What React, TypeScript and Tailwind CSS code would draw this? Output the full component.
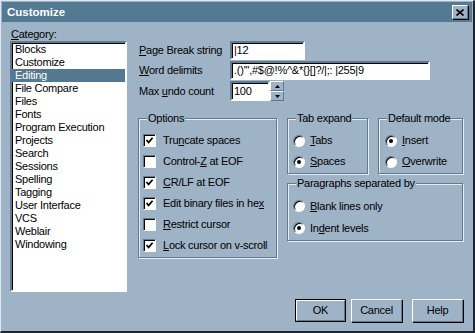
import React from 'react'

const BG = 'bg-[#9fb3c6]'

// raised 3d edge used for buttons
const raised =
  'border border-t-white border-l-white border-r-[#5f7b90] border-b-[#5f7b90] shadow-[1px_1px_0_#000]'
// sunken edge used for edit fields and list
const sunken =
  'border-2 border-t-[#5f7b90] border-l-[#5f7b90] border-r-white border-b-white shadow-[inset_1px_1px_0_#000]'

const Mn: React.FC<{ children: React.ReactNode }> = ({ children }) => (
  <u className="underline underline-offset-[1px] decoration-1">{children}</u>
)

const Check: React.FC<{ on?: boolean }> = ({ on }) => (
  <span className="w-[13px] h-[13px] bg-white border border-t-[#5f7b90] border-l-[#5f7b90] border-r-white border-b-white shadow-[inset_1px_1px_0_#000] flex items-center justify-center shrink-0">
    {on && (
      <svg width="9" height="9" viewBox="0 0 9 9">
        <polyline points="1.5,4 3.6,6.4 7.6,1.8" fill="none" stroke="#000" strokeWidth="1.7" />
      </svg>
    )}
  </span>
)

const Radio: React.FC<{ on?: boolean }> = ({ on }) => (
  <span className="w-[12px] h-[12px] rounded-full bg-white border border-t-[#5f7b90] border-l-[#5f7b90] border-r-white border-b-white shadow-[inset_1px_1px_0_#000] flex items-center justify-center shrink-0">
    {on && <span className="w-[4px] h-[4px] rounded-full bg-black" />}
  </span>
)

const Group: React.FC<{ title: string; className: string; children: React.ReactNode }> = ({
  title,
  className,
  children,
}) => (
  <div
    className={`relative border border-[#5f7b90] shadow-[inset_1px_1px_0_#e6edf3,1px_1px_0_#e6edf3] ${className}`}
  >
    <span className={`absolute left-[8px] top-[-8px] px-[1px] leading-[14px] whitespace-nowrap ${BG}`}>
      {title}
    </span>
    {children}
  </div>
)

const categories = [
  'Blocks',
  'Customize',
  'Editing',
  'File Compare',
  'Files',
  'Fonts',
  'Program Execution',
  'Projects',
  'Search',
  'Sessions',
  'Spelling',
  'Tagging',
  'User Interface',
  'VCS',
  'Weblair',
  'Windowing',
]

const options: { label: React.ReactNode; on: boolean }[] = [
  { label: <>Tru<Mn>n</Mn>cate spaces</>, on: true },
  { label: <>Control-<Mn>Z</Mn> at EOF</>, on: false },
  { label: <><Mn>C</Mn>R/LF at EOF</>, on: true },
  { label: <>Edit binary files in he<Mn>x</Mn></>, on: true },
  { label: <><Mn>R</Mn>estrict cursor</>, on: false },
  { label: <><Mn>L</Mn>ock cursor on v-scroll</>, on: true },
]

const Btn: React.FC<{ children: React.ReactNode; def?: boolean; className?: string }> = ({
  children,
  def,
  className = '',
}) => (
  <div className={`${def ? 'border border-black' : ''} ${className}`}>
    <div className={`h-full flex items-center justify-center ${raised} ${BG}`}>{children}</div>
  </div>
)

export default function App() {
  return (
    <div
      className={`w-[475px] h-[333px] ${BG} border-t border-l border-t-[#dfe7ee] border-l-[#dfe7ee] border-r-2 border-b-2 border-r-[#1a2530] border-b-[#1a2530] flex flex-col text-black text-[11px] tracking-[-0.25px] leading-[13px] whitespace-nowrap`}
      style={{ fontFamily: '"Liberation Sans", Arial, sans-serif' }}
    >
      {/* title bar */}
      <div className="mx-[1px] mt-[1px] h-[20px] bg-[#537a93] flex items-center justify-between pl-[5px] pr-[4px]">
        <span className="text-white font-bold text-[11.5px] tracking-normal">Customize</span>
        <div className={`w-[16px] h-[14px] flex items-center justify-center ${raised} ${BG}`}>
          <svg width="8" height="7" viewBox="0 0 8 7">
            <path d="M0.5 0.5 L7.5 6.5 M7.5 0.5 L0.5 6.5" stroke="#000" strokeWidth="1.6" />
          </svg>
        </div>
      </div>

      <div className="flex pl-[9px]">
        {/* category list */}
        <div className="w-[117px] pt-[5px]">
          <div className="h-[14px] leading-[14px] pl-[1px]">
            <Mn>C</Mn>ategory:
          </div>
          <div className={`h-[251px] bg-white ${sunken}`}>
            {categories.map((c) => (
              <div
                key={c}
                className={`h-[13px] leading-[13px] pl-[3px] ${
                  c === 'Editing' ? 'bg-[#53788f] text-white' : ''
                }`}
              >
                {c}
              </div>
            ))}
          </div>
        </div>

        {/* settings */}
        <div className="w-[325px] ml-[11px] pt-[19px] flex flex-col">
          <div className="flex items-center h-[19px]">
            <span className="w-[92px] pl-[1px]">
              <Mn>P</Mn>age Break string
            </span>
            <div className={`w-[75px] h-[19px] bg-white ${sunken} pl-[2px] leading-[15px]`}>|12</div>
          </div>
          <div className="flex items-center h-[19px] mt-[1px]">
            <span className="w-[92px] pl-[1px]">
              <Mn>W</Mn>ord delimits
            </span>
            <div className={`w-[200px] h-[19px] bg-white ${sunken} pl-[2px] leading-[15px] overflow-hidden`}>
              .()'",#$@!%^&amp;*{'{}'}[]?/|;: |255|9
            </div>
          </div>
          <div className="flex items-center h-[20px] mt-[1px]">
            <span className="w-[92px] pl-[1px]">
              Max <Mn>u</Mn>ndo count
            </span>
            <div className={`w-[40px] h-[20px] bg-white ${sunken} pl-[2px] leading-[16px]`}>100</div>
            <div className="flex flex-col w-[14px] h-[20px]">
              <div className={`h-[10px] flex items-center justify-center ${raised} shadow-none ${BG}`}>
                <svg width="5" height="3" viewBox="0 0 5 3">
                  <path d="M2.5 0 L5 3 L0 3 Z" fill="#000" />
                </svg>
              </div>
              <div className={`h-[10px] flex items-center justify-center ${raised} shadow-none ${BG}`}>
                <svg width="5" height="3" viewBox="0 0 5 3">
                  <path d="M0 0 L5 0 L2.5 3 Z" fill="#000" />
                </svg>
              </div>
            </div>
          </div>

          <div className="flex mt-[17px]">
            <Group title="Options" className="w-[140px] h-[140px] pt-[11px] pl-[4px]">
              {options.map((o, i) => (
                <div key={i} className="h-[21px] flex items-center gap-[7px]">
                  <Check on={o.on} />
                  <span>{o.label}</span>
                </div>
              ))}
            </Group>

            <div className="ml-[10px] flex flex-col">
              <div className="flex">
                <Group title="Tab expand" className="w-[81px] h-[56px] pt-[11px] pl-[5px]">
                  <div className="h-[21px] flex items-center gap-[5px]">
                    <Radio />
                    <span>
                      <Mn>T</Mn>abs
                    </span>
                  </div>
                  <div className="h-[21px] flex items-center gap-[5px]">
                    <Radio on />
                    <span>
                      <Mn>S</Mn>paces
                    </span>
                  </div>
                </Group>
                <Group title="Default mode" className="ml-[10px] w-[85px] h-[56px] pt-[11px] pl-[6px]">
                  <div className="h-[21px] flex items-center gap-[5px]">
                    <Radio on />
                    <span>
                      <Mn>I</Mn>nsert
                    </span>
                  </div>
                  <div className="h-[21px] flex items-center gap-[5px]">
                    <Radio />
                    <span>
                      <Mn>O</Mn>verwrite
                    </span>
                  </div>
                </Group>
              </div>
              <Group title="Paragraphs separated by" className="mt-[9px] w-[176px] h-[58px] pt-[11px] pl-[5px]">
                <div className="h-[22px] flex items-center gap-[5px]">
                  <Radio />
                  <span>
                    <Mn>B</Mn>lank lines only
                  </span>
                </div>
                <div className="h-[22px] flex items-center gap-[5px]">
                  <Radio on />
                  <span>
                    In<Mn>d</Mn>ent levels
                  </span>
                </div>
              </Group>
            </div>
          </div>

          <div className="flex justify-end mt-[41px]">
            <Btn def className="w-[51px] h-[23px]">
              OK
            </Btn>
            <Btn className="ml-[5px] w-[51px] h-[23px]">Cancel</Btn>
            <Btn className="ml-[10px] w-[51px] h-[23px]">Help</Btn>
          </div>
        </div>
      </div>
    </div>
  )
}
